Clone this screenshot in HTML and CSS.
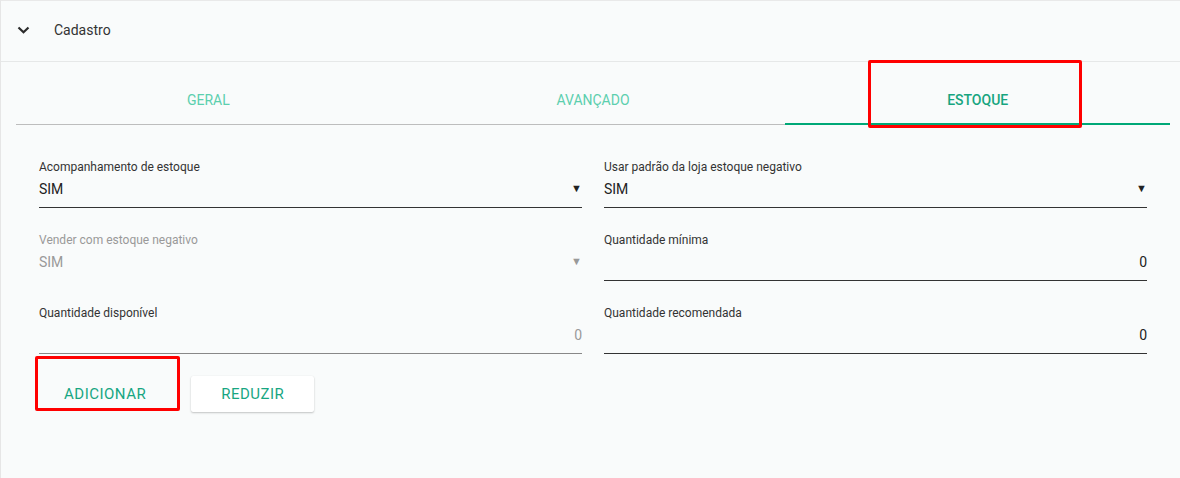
FILE: index.html
```html
<!DOCTYPE html>
<html lang="pt-BR">
<head>
<meta charset="utf-8">
<title>Cadastro</title>
<link rel="stylesheet" href="styles.css">
</head>
<body>
<div class="panel">
  <div class="panel-header">
    <svg class="chevron" width="13" height="8" viewBox="0 0 13 8"><polyline points="1.5,1.5 6.5,6.2 11.5,1.5" fill="none" stroke="#2b2b2b" stroke-width="2.2"/></svg>
    <span class="panel-title">Cadastro</span>
  </div>
  <div class="tabs">
    <div class="tab">GERAL</div>
    <div class="tab">AVANÇADO</div>
    <div class="tab active">ESTOQUE</div>
  </div>
  <div class="form">
    <div class="field">
      <div class="label">Acompanhamento de estoque</div>
      <div class="value select"><span>SIM</span><span class="arrow">▼</span></div>
    </div>
    <div class="field">
      <div class="label">Usar padrão da loja estoque negativo</div>
      <div class="value select"><span>SIM</span><span class="arrow">▼</span></div>
    </div>
    <div class="field disabled">
      <div class="label">Vender com estoque negativo</div>
      <div class="value select"><span>SIM</span><span class="arrow">▼</span></div>
    </div>
    <div class="field">
      <div class="label">Quantidade mínima</div>
      <div class="value number">0</div>
    </div>
    <div class="field readonly">
      <div class="label">Quantidade disponível</div>
      <div class="value number">0</div>
    </div>
    <div class="field">
      <div class="label">Quantidade recomendada</div>
      <div class="value number">0</div>
    </div>
  </div>
  <div class="actions">
    <button class="btn btn-flat">ADICIONAR</button>
    <button class="btn btn-raised">REDUZIR</button>
  </div>
</div>
<div class="mark mark-tab"></div>
<div class="mark mark-btn"></div>
</body>
</html>
```

FILE: styles.css
```css
* { box-sizing: border-box; }
html, body {
  margin: 0;
  padding: 0;
  background: #f9fbfb;
  font-family: Roboto, "Liberation Sans", sans-serif;
  color: #333;
}
.panel {
  width: 1180px;
  height: 478px;
  border-left: 1px solid #e6e6e6;
  border-top: 1px solid #e9e9e9;
  background: #f9fbfb;
}
.panel-header {
  height: 61px;
  display: flex;
  align-items: center;
  padding-left: 16px;
  border-bottom: 1px solid #e6e8e8;
  padding-bottom: 2px;
}
.chevron { margin-right: 24px; }
.panel-title {
  font-size: 14px;
  color: #333;
}
.tabs {
  display: flex;
  margin: 0 10px 0 15px;
  border-bottom: 1px solid #bdbdbd;
}
.tab {
  flex: 1;
  text-align: center;
  font-size: 14px;
  line-height: 16px;
  padding: 30px 0 16px;
  color: #5ccfae;
  position: relative;
}
.tab.active {
  color: #17a57f;
  font-weight: 500;
}
.tab.active::after {
  content: "";
  position: absolute;
  left: 0;
  right: 0;
  bottom: -1px;
  height: 2px;
  background: #00a877;
}
.form {
  display: grid;
  grid-template-columns: 543px 543px;
  column-gap: 22px;
  row-gap: 24px;
  padding: 34px 0 0 38px;
}
.field .label {
  font-size: 12px;
  line-height: 16px;
  color: #333;
}
.field .value {
  margin-top: 4px;
  font-size: 14px;
  line-height: 20px;
  padding-bottom: 8px;
  border-bottom: 1px solid #333;
  color: #222;
}
.value.select {
  display: flex;
  justify-content: space-between;
}
.value .arrow {
  font-size: 11px;
  color: #222;
  padding-right: 0;
}
.value.number { text-align: right; }
.field.disabled .label,
.field.disabled .value,
.field.disabled .arrow { color: #999; }
.field.disabled .value { border-bottom-color: transparent; }
.field.readonly .value { color: #999; border-bottom-color: #888; }
.actions {
  display: flex;
  gap: 20px;
  padding: 22px 0 0 38px;
}
.btn {
  height: 36px;
  border: none;
  border-radius: 2px;
  font-family: Roboto, "Liberation Sans", sans-serif;
  font-size: 15px;
  letter-spacing: 0.5px;
  color: #17a682;
  background: transparent;
  padding: 0 25px;
  cursor: pointer;
}
.btn-raised {
  background: #fff;
  min-width: 123px;
  box-shadow: 0 1px 2px rgba(0,0,0,0.22), 0 0 1px rgba(0,0,0,0.08);
}
.mark {
  position: absolute;
  border: 3px solid #ff0000;
  border-radius: 2px;
}
.mark-tab { left: 868px; top: 60px; width: 214px; height: 68px; }
.mark-btn { left: 35px; top: 356px; width: 145px; height: 55px; }
```
